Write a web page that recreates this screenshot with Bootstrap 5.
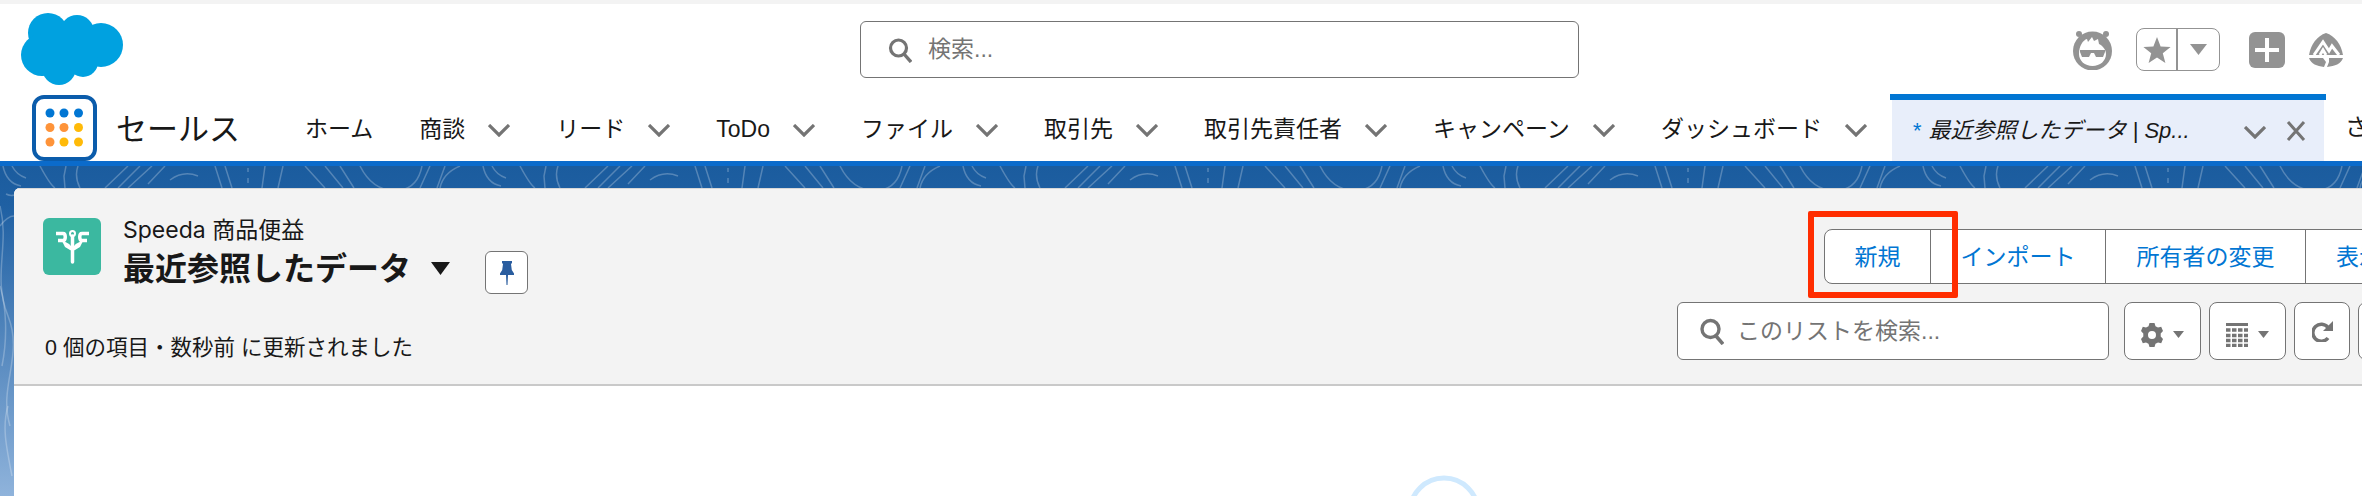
<!DOCTYPE html>
<html lang="ja">
<head>
    <meta charset="UTF-8">
    <title>最近参照したデータ | Speeda 商品便益</title>
    <link href="https://cdn.jsdelivr.net/npm/bootstrap@5.3.0/dist/css/bootstrap.min.css" rel="stylesheet">
    <style>
        body {
            height: 496px;
            overflow: hidden;
            background: #fff;
            color: #181818;
            font-family: "Liberation Sans", "Noto Sans CJK JP", sans-serif;
        }
        .top-strip { height: 4px; background: #f3f3f3; }
        .global-row { height: 90px; padding-left: 21px; position: relative; }
        .sf-logo { width: 103px; height: 72px; margin-top: 9px; flex: none; }
        .global-search {
            width: 719px; height: 57px; margin-left: 736px; margin-top: 17px;
            border: 1px solid #747474; border-radius: 6px; background: #fff;
            padding: 0 0 0 27px; gap: 16px; color: #747474; font-size: 23px; flex: none;
        }
        .global-tools { margin-left: 493px; margin-top: 24px; flex: none; }
        .fav-group {
            width: 84px; height: 43px; border: 1px solid #939393; border-radius: 8px;
            margin: 0 29px 0 23px;
        }
        .fav-group > div { height: 100%; }
        .fav-star { width: 41px; border-right: 2px solid #939393; }
        .app-nav { height: 67px; margin-bottom: 0; padding-left: 32px; font-size: 23px; }
        .app-launcher {
            width: 65px; height: 66px; border: 4px solid #0b5cab; border-radius: 12px;
            flex: none; margin-top: 1px;
        }
        .app-name { font-size: 31px; width: 166px; margin-left: 19px; flex: none; line-height: 1; margin-top: 3px; }
        .nav-entry { height: 67px; padding: 0 23px; gap: 23px; color: #181818; white-space: nowrap; flex: none; padding-top: 3px; }
        .nav-chevron { width: 22px; height: 13px; flex: none; margin-top: 3px; }
        .nav-active {
            width: 436px; height: 67px; flex: none; border-top: 6px solid #0176d3;
            padding: 0 0 0 22px; font-style: italic; position: relative;
            background: linear-gradient(#fff, #fff) left top/2px 100% no-repeat,
                        linear-gradient(#fff, #fff) right top/2px 100% no-repeat, #e8eefa;
        }
        .nav-active .tab-label { width: 316px; white-space: nowrap; font-size: 22px; }
        .tab-star { color: #0176d3; margin-right: 8px; }
        .tab-close { margin-left: 20px; }
        .nav-next { padding-left: 19px; white-space: nowrap; }
        .brand-line { height: 5px; background: #0b6bcb; }
        .page-area {
            position: relative; height: 330px; padding: 22px 0 0 14px;
            background: linear-gradient(#1b5c9e 0, #1f60a3 40px, #8fb3db 330px);
        }
        .bg-lines { position: absolute; left: 0; top: 0; width: 2362px; height: 330px; }
        .list-panel {
            position: relative; width: 2400px; height: 320px; background: #fff;
            border-radius: 6px 0 0 0; overflow: hidden;
        }
        .panel-head {
            height: 198px; background: #f3f3f3; border-top: 1px solid #d8d8d8;
            border-bottom: 2px solid #c9c9c9;
        }
        .head-left { width: 1663px; padding: 29px 0 0 29px; flex: none; }
        .object-icon {
            width: 58px; height: 57px; background: #3bb8a0; border-radius: 6px; flex: none; margin-right: 22px;
        }
        .object-name { font-family: Inter, "Noto Sans CJK JP", sans-serif; font-size: 23px; line-height: 25px; }
        .list-title { font-size: 32px; font-weight: 700; line-height: 44px; }
        .title-caret { margin-left: 20px; width: 19px; height: 13px; }
        .pin-btn {
            width: 43px; height: 43px; padding: 0; margin-left: 35px; margin-top: 8px;
            background: #fff; border: 1px solid #747474; border-radius: 6px;
        }
        .list-status { font-size: 21.5px; line-height: 28px; margin-top: 40px; margin-left: 2px; }
        .head-right { padding-top: 40px; position: relative; flex: none; }
        .action-group { margin-left: 147px; height: 55px; }
        .action-group .btn {
            font-size: 23px; line-height: 1; color: #0176d3; background: #fff;
            border: 1px solid #747474; border-radius: 0; flex: none; padding: 2px 0 0;
        }
        .action-group .btn:first-child { border-radius: 8px 0 0 8px; }
        .act-new { width: 107px; }
        .act-import { width: 176px; margin-left: -1px; }
        .act-owner { width: 201px; margin-left: -1px; }
        .act-show { width: 120px; margin-left: -1px; text-align: left; padding-left: 30px !important; }
        .tool-row { margin-top: 18px; gap: 8px; }
        .list-search {
            width: 432px; height: 58px; padding: 0 0 0 22px; margin-right: 7px; gap: 13px;
            color: #747474; font-size: 23px; border: 1px solid #747474; border-radius: 6px; background: #fff; flex: none;
        }
        .tool-btn {
            height: 58px; background: #fff; border: 1px solid #747474; border-radius: 8px; padding: 0;
            gap: 10px; flex: none;
        }
        .tool-btn svg { margin-top: 7px; }
        .tool-btn .refresh-glyph { margin-top: 0; }
        .tool-wide { width: 77px; }
        .tool-narrow { width: 56px; }
        .callout {
            position: absolute; left: 131px; top: 22px; width: 150px; height: 87px;
            border: 6px solid #ff2d00; border-radius: 2px;
        }
        .spinner-ring { position: absolute; left: 1393px; top: 287px; }
    </style>
</head>
<body>

<div class="top-strip"></div>

<header class="global-row d-flex align-items-start">
    <svg class="sf-logo" viewBox="0 0 103 72"><g fill="#00a1e0">
        <circle cx="27" cy="20" r="20"/><circle cx="56" cy="19" r="17"/><circle cx="80" cy="32" r="22"/>
        <circle cx="21" cy="42" r="21"/><circle cx="38" cy="55" r="17"/><circle cx="62" cy="49" r="15"/><rect x="20" y="20" width="55" height="30"/></g></svg>
    <div class="global-search d-flex align-items-center">
        <svg width="24" height="26" viewBox="0 0 24 26" fill="none" stroke="#747474"><circle cx="10.5" cy="11" r="8" stroke-width="3.2"/><path d="M16 17l7 8" stroke-width="3.4"/></svg>
        <span>検索...</span>
    </div>
    <div class="global-tools d-flex align-items-center">
        <svg width="41" height="40" viewBox="0 0 41 40">
            <circle cx="7" cy="4" r="3" fill="#939393"/><circle cx="34" cy="4" r="3" fill="#939393"/>
            <circle cx="20.5" cy="21" r="19.5" fill="#939393"/>
            <path d="M7 24c0-8 4-14 8-15l1 3 4-5 2 4 4-2 1 5c4 2 7 6 7 10 0 7-6 12-13.5 12S7 31 7 24z" fill="#fff"/>
            <path d="M8 20h25v2l-2 5h-7l-2-4h-3l-2 4h-7l-2-5z" fill="#939393"/>
        </svg>
        <div class="fav-group d-flex">
            <div class="fav-star d-flex align-items-center justify-content-center">
                <svg width="28" height="28" viewBox="0 0 28 28"><path fill="#939393" d="M14 1l3.6 9.4 10 .5-7.8 6.3 2.6 9.7L14 21.4l-8.4 5.5 2.6-9.7L.4 10.9l10-.5z"/></svg>
            </div>
            <div class="flex-grow-1 d-flex align-items-center justify-content-center">
                <svg width="17" height="11" viewBox="0 0 17 11"><path fill="#939393" d="M0 0h17l-8.5 11z"/></svg>
            </div>
        </div>
        <svg width="36" height="36" viewBox="0 0 36 36"><rect width="36" height="36" rx="6" fill="#939393"/><path d="M18 6v24M6 18h24" stroke="#fff" stroke-width="4"/></svg>
        <svg class="ms-4" width="34" height="34" viewBox="0 0 34 34">
            <path fill="#939393" d="M17 0c9 3 15 11 17 22H0C2 11 8 3 17 0z"/>
            <path fill="#939393" d="M0 25h14l3 4-2 5C8 33 2 31 0 25zM20 25h14c-2 6-8 8-16 9l2-5z"/>
            <path fill="none" stroke="#fff" stroke-width="3" d="M5 22L14 9l6 9 3-5 7 9M11 22l3-5 3 5"/>
        </svg>
    </div>
</header>

<nav class="app-nav d-flex align-items-center">
    <div class="app-launcher d-flex align-items-center justify-content-center">
        <svg width="40" height="40" viewBox="0 0 40 40">
            <circle cx="5" cy="5" r="4.5" fill="#0176d3"/><circle cx="19" cy="5" r="4.5" fill="#0176d3"/><circle cx="33.5" cy="5" r="4.5" fill="#0176d3"/>
            <circle cx="5" cy="19.5" r="4.5" fill="#fe9339"/><circle cx="19" cy="19.5" r="4.5" fill="#fe9339"/><circle cx="33.5" cy="19.5" r="4.5" fill="#ffba08"/>
            <circle cx="5" cy="34" r="4.5" fill="#fe9339"/><circle cx="19" cy="34" r="4.5" fill="#ffba08"/><circle cx="33.5" cy="34" r="4.5" fill="#ffba08"/>
        </svg>
    </div>
    <div class="app-name">セールス</div>
    <div id="navEntries" class="d-flex align-items-center"></div>
    <div class="nav-active d-flex align-items-center">
        <span class="tab-label"><span class="tab-star">*</span>最近参照したデータ | Sp...</span>
        <svg class="nav-chevron ms-3" viewBox="0 0 22 13" fill="none" stroke="#747474" stroke-width="3.2"><path d="M1 1l10 10L21 1"/></svg>
        <svg class="tab-close" width="20" height="20" viewBox="0 0 20 20" stroke="#747474" stroke-width="3"><path d="M2 1l16 18M18 1L2 19"/></svg>
    </div>
    <div class="nav-next">さ</div>
</nav>

<div class="brand-line"></div>

<main class="page-area">
    <svg class="bg-lines" viewBox="0 0 2362 330" fill="none" stroke="#fff" stroke-opacity=".25" stroke-width="1.5">
        <path d="M0 40c10 40-8 70 8 110s-10 70 2 110"/>
        <path d="M6 28c4 2 6 2 8 1M0 60c6-8 10-10 14-10"/>
        <path d="M0 120c6 20 8 50 2 80M8 240c-6 20-2 40 4 70"/>
        <g id="topLines"></g>
    </svg>
    <section class="list-panel">
        <div class="panel-head d-flex">
            <div class="head-left">
                <div class="d-flex">
                    <div class="object-icon d-flex align-items-center justify-content-center">
                        <svg width="37" height="34" viewBox="0 0 37 34" fill="none" stroke="#fff" stroke-width="3.5">
                            <path d="M2 3.5h7c3 0 3 7 0 7H4M35 3.5h-7c-3 0-3 7 0 7h5"/>
                            <circle cx="18.5" cy="3.5" r="2.5" stroke-width="2"/>
                            <path d="M18.5 6v26" stroke-linecap="round"/>
                            <path fill="#fff" stroke="none" d="M8 11c4 1 8 2 10.5 8 2.5-6 6.5-7 10.5-8l-3 6-5 3-2.5 1-2.5-1-5-3z"/>
                        </svg>
                    </div>
                    <div>
                        <div class="object-name">Speeda 商品便益</div>
                        <div class="d-flex align-items-center">
                            <h1 class="list-title mb-0">最近参照したデータ</h1>
                            <svg class="title-caret" viewBox="0 0 19 13"><path d="M0 0h19L9.5 13z" fill="#181818"/></svg>
                            <button class="pin-btn d-flex align-items-center justify-content-center" type="button">
                                <svg width="14" height="24" viewBox="0 0 14 24"><path fill="#2a5d9f" d="M2 0h10v2l-1 1 .8 6L14 12.5V14H8L7.5 24h-1L6 14H0v-1.5L2.2 9 3 3 2 2z"/></svg>
                            </button>
                        </div>
                    </div>
                </div>
                <div class="list-status">0 個の項目・数秒前 に更新されました</div>
            </div>
            <div class="head-right">
                <div class="action-group btn-group d-flex">
                    <button class="btn act-new" type="button">新規</button>
                    <button class="btn act-import" type="button">インポート</button>
                    <button class="btn act-owner" type="button">所有者の変更</button>
                    <button class="btn act-show" type="button">表示</button>
                </div>
                <div class="tool-row d-flex">
                    <div class="list-search d-flex align-items-center">
                        <svg width="24" height="27" viewBox="0 0 24 27" fill="none" stroke="#747474"><circle cx="10.5" cy="11" r="8.5" stroke-width="3.4"/><path d="M16 18l7 8" stroke-width="3.6"/></svg>
                        <span>このリストを検索...</span>
                    </div>
                    <button class="tool-btn tool-wide d-flex align-items-center justify-content-center" type="button">
                        <svg width="22" height="24" viewBox="0 0 22 24"><path fill="#747474" fill-rule="evenodd" d="M8.5 0h5l1 3.2 2.5 1.4 3.2-.8L22 8l-2.3 2.5v3L22 16l-1.8 4.2-3.2-.8-2.5 1.4-1 3.2h-5l-1-3.2L5 19.4l-3.2.8L0 16l2.3-2.5v-3L0 8l1.8-4.2 3.2.8 2.5-1.4zM11 8a4 4 0 100 8 4 4 0 000-8z"/></svg>
                        <svg width="11" height="7" viewBox="0 0 11 7"><path fill="#747474" d="M0 0h11L5.5 7z"/></svg>
                    </button>
                    <button class="tool-btn tool-wide d-flex align-items-center justify-content-center" type="button">
                        <svg width="22" height="24" viewBox="0 0 22 24"><path fill="#747474" d="M0 0h22v3H0z"/><path stroke="#747474" stroke-width="3.5" stroke-dasharray="4.5 1.5" d="M0 7h22M0 12.5h22M0 17.5h22M0 22.5h22"/></svg>
                        <svg width="11" height="7" viewBox="0 0 11 7"><path fill="#747474" d="M0 0h11L5.5 7z"/></svg>
                    </button>
                    <button class="tool-btn tool-narrow d-flex align-items-center justify-content-center" type="button">
                        <svg class="refresh-glyph" width="21" height="21" viewBox="0 0 21 21" fill="none"><path d="M16 6.500A8.500 8.500 0 1016 17" stroke="#747474" stroke-width="3.5"/><path fill="#747474" d="M21 0v10H11z"/></svg>
                    </button>
                    <button class="tool-btn tool-narrow" type="button"></button>
                </div>
                <div class="callout"></div>
            </div>
        </div>
        <svg class="spinner-ring" width="74" height="74" viewBox="0 0 74 74" fill="none"><circle cx="37" cy="37" r="34" stroke="#cfe9fe" stroke-width="5"/></svg>
    </section>
</main>

<script>
    // tabs of the app nav, with or without the dropdown chevron
    const navItems = [
        ['ホーム', false], ['商談', true], ['リード', true], ['ToDo', true], ['ファイル', true],
        ['取引先', true], ['取引先責任者', true], ['キャンペーン', true], ['ダッシュボード', true]
    ];
    const navEntries = document.getElementById('navEntries');
    navItems.forEach(([label, hasMenu]) => {
        const item = document.createElement('div');
        item.className = 'nav-entry d-flex align-items-center';
        item.innerHTML = '<span>' + label + '</span>' + (hasMenu
            ? '<svg class="nav-chevron" viewBox="0 0 22 13" fill="none" stroke="#747474" stroke-width="3.2"><path d="M1 1l10 10L21 1"/></svg>'
            : '');
        navEntries.appendChild(item);
    });

    // contour lines in the strip of page background above the panel, one tile repeated
    const contourTile = 'M3 0c2 10 8 18 18 20M12 0c3 6 8 10 14 12M40 0c8 15 12 20 15 22M66 0l-2 10 1 12M78 0c-3 8-1 16 2 22' +
        'M128 0L105 22M140 0L118 22M152 0L128 22M165 0L148 18M170 14c8-6 18-8 28-4M215 0l7 22M225 0l7 22M248 2v4M248 12v5' +
        'M265 0l-3 22M283 0l-5 22M305 0l20 22M325 0l18 22M340 0l14 22M360 0c10 20 25 26 40 24s20-14 22-24M430 0l-10 22M445 0l-8 22M460 0c-12 5-18 12-20 22';
    const topLines = document.getElementById('topLines');
    let lines = '';
    for (let x = 0; x < 2362; x += 480) {
        lines += '<path transform="translate(' + x + ' 0)" d="' + contourTile + '"/>';
    }
    topLines.innerHTML = lines;
</script>

<script src="https://cdn.jsdelivr.net/npm/bootstrap@5.3.0/dist/js/bootstrap.bundle.min.js"></script>
</body>
</html>
